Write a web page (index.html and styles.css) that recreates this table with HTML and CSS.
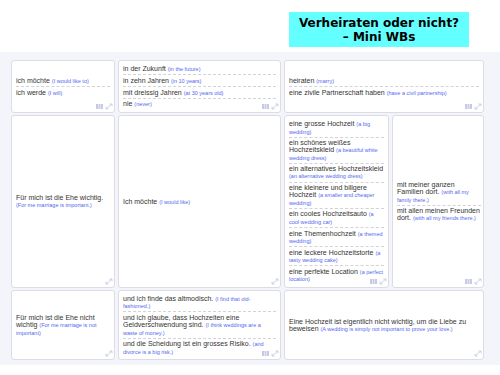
FILE: index.html
```html
<!DOCTYPE html>
<html lang="de">
<head>
<meta charset="utf-8">
<title>Verheiraten oder nicht? – Mini WBs</title>
<link rel="stylesheet" href="styles.css">
</head>
<body>
<header class="top">
  <h1 class="title">Verheiraten oder nicht?<br>– Mini WBs</h1>
</header>
<main class="board">
  <!-- row 1 -->
  <section class="card">
    <ul class="list">
      <li class="item">ich möchte <span class="t">(I would like to)</span></li>
      <li class="item">ich werde <span class="t">(I will)</span></li>
    </ul>
    <div class="tools"><svg class="ic-grid" viewBox="0 0 7 5"><rect x="0" y="0" width="2" height="5"/><rect x="2.5" y="0" width="2" height="5"/><rect x="5" y="0" width="2" height="5"/></svg><svg class="ic-arrow" viewBox="0 0 8 7"><path d="M1 6 L7 1 M4.4 1 H7 V3.4 M1 3.6 V6 H3.6"/></svg></div>
  </section>
  <section class="card">
    <ul class="list">
      <li class="item">in der Zukunft <span class="t">(in the future)</span></li>
      <li class="item">in zehn Jahren <span class="t">(in 10 years)</span></li>
      <li class="item">mit dreissig Jahren <span class="t">(at 30 years old)</span></li>
      <li class="item">nie <span class="t">(never)</span></li>
    </ul>
    <div class="tools"><svg class="ic-grid" viewBox="0 0 7 5"><rect x="0" y="0" width="2" height="5"/><rect x="2.5" y="0" width="2" height="5"/><rect x="5" y="0" width="2" height="5"/></svg><svg class="ic-arrow" viewBox="0 0 8 7"><path d="M1 6 L7 1 M4.4 1 H7 V3.4 M1 3.6 V6 H3.6"/></svg></div>
  </section>
  <section class="card wide">
    <ul class="list">
      <li class="item">heiraten <span class="t">(marry)</span></li>
      <li class="item">eine zivile Partnerschaft haben <span class="t">(have a civil partnership)</span></li>
    </ul>
    <div class="tools"><svg class="ic-grid" viewBox="0 0 7 5"><rect x="0" y="0" width="2" height="5"/><rect x="2.5" y="0" width="2" height="5"/><rect x="5" y="0" width="2" height="5"/></svg><svg class="ic-arrow" viewBox="0 0 8 7"><path d="M1 6 L7 1 M4.4 1 H7 V3.4 M1 3.6 V6 H3.6"/></svg></div>
  </section>

  <!-- row 2 -->
  <section class="card">
    <ul class="list">
      <li class="item">Für mich ist die Ehe wichtig. <span class="t">(For me marriage is important.)</span></li>
    </ul>
    <div class="tools"><svg class="ic-arrow" viewBox="0 0 8 7"><path d="M1 6 L7 1 M4.4 1 H7 V3.4 M1 3.6 V6 H3.6"/></svg></div>
  </section>
  <section class="card">
    <ul class="list">
      <li class="item">Ich möchte <span class="t">(I would like)</span></li>
    </ul>
    <div class="tools"><svg class="ic-arrow" viewBox="0 0 8 7"><path d="M1 6 L7 1 M4.4 1 H7 V3.4 M1 3.6 V6 H3.6"/></svg></div>
  </section>
  <section class="card">
    <ul class="list">
      <li class="item">eine grosse Hochzeit <span class="t">(a big wedding)</span></li>
      <li class="item">ein schönes weißes Hochzeitskleid <span class="t">(a beautiful white wedding dress)</span></li>
      <li class="item">ein alternatives Hochzeitskleid <span class="t">(an alternative wedding dress)</span></li>
      <li class="item">eine kleinere und billgere Hochzeit <span class="t">(a smaller and cheaper wedding)</span></li>
      <li class="item">ein cooles Hochzeitsauto <span class="t">(a cool wedding car)</span></li>
      <li class="item">eine Themenhochzeit <span class="t">(a themed wedding)</span></li>
      <li class="item">eine leckere Hochzeitstorte <span class="t">(a tasty wedding cake)</span></li>
      <li class="item">eine perfekte Location <span class="t">(a perfect location)</span></li>
    </ul>
    <div class="tools"><svg class="ic-grid" viewBox="0 0 7 5"><rect x="0" y="0" width="2" height="5"/><rect x="2.5" y="0" width="2" height="5"/><rect x="5" y="0" width="2" height="5"/></svg><svg class="ic-arrow" viewBox="0 0 8 7"><path d="M1 6 L7 1 M4.4 1 H7 V3.4 M1 3.6 V6 H3.6"/></svg></div>
  </section>
  <section class="card narrow">
    <ul class="list">
      <li class="item">mit meiner ganzen Familien dort. <span class="t">(with all my family there.)</span></li>
      <li class="item">mit allen meinen Freunden dort. <span class="t">(with all my friends there.)</span></li>
    </ul>
    <div class="tools"><svg class="ic-grid" viewBox="0 0 7 5"><rect x="0" y="0" width="2" height="5"/><rect x="2.5" y="0" width="2" height="5"/><rect x="5" y="0" width="2" height="5"/></svg><svg class="ic-arrow" viewBox="0 0 8 7"><path d="M1 6 L7 1 M4.4 1 H7 V3.4 M1 3.6 V6 H3.6"/></svg></div>
  </section>

  <!-- row 3 -->
  <section class="card">
    <ul class="list">
      <li class="item">Für mich ist die Ehe nicht wichtig <span class="t">(For me marriage is not important)</span></li>
    </ul>
    <div class="tools"><svg class="ic-arrow" viewBox="0 0 8 7"><path d="M1 6 L7 1 M4.4 1 H7 V3.4 M1 3.6 V6 H3.6"/></svg></div>
  </section>
  <section class="card">
    <ul class="list">
      <li class="item">und ich finde das altmodisch. <span class="t">(I find that old-fashioned.)</span></li>
      <li class="item">und ich glaube, dass Hochzeiten eine Geldverschwendung sind. <span class="t">(I think weddings are a waste of money.)</span></li>
      <li class="item">und die Scheidung ist ein grosses Risiko. <span class="t">(and divorce is a big risk.)</span></li>
    </ul>
    <div class="tools"><svg class="ic-grid" viewBox="0 0 7 5"><rect x="0" y="0" width="2" height="5"/><rect x="2.5" y="0" width="2" height="5"/><rect x="5" y="0" width="2" height="5"/></svg><svg class="ic-arrow" viewBox="0 0 8 7"><path d="M1 6 L7 1 M4.4 1 H7 V3.4 M1 3.6 V6 H3.6"/></svg></div>
  </section>
  <section class="card wide">
    <ul class="list">
      <li class="item">Eine Hochzeit ist eigentlich nicht wichtig, um die Liebe zu beweisen <span class="t">(A wedding is simply not important to prove your love.)</span></li>
    </ul>
    <div class="tools"><svg class="ic-arrow" viewBox="0 0 8 7"><path d="M1 6 L7 1 M4.4 1 H7 V3.4 M1 3.6 V6 H3.6"/></svg></div>
  </section>
</main>
</body>
</html>
```
FILE: styles.css
```css
html, body {
  margin: 0;
  padding: 0;
  background: #ffffff;
}

.top {
  height: 52px;
  box-sizing: border-box;
  display: flex;
  justify-content: flex-end;
  align-items: flex-start;
  padding: 12px 31px 0 0;
}

.title {
  margin: 0;
  width: 180px;
  height: 35px;
  box-sizing: border-box;
  padding: 3.5px 0;
  background: #64ffff;
  color: #000;
  font-family: "DejaVu Sans", Verdana, sans-serif;
  font-weight: bold;
  font-size: 12px;
  line-height: 14px;
  text-align: center;
}

.board {
  background: #f3f5fb;
  height: 313px;
  box-sizing: border-box;
  padding: 8px 16px 5px 11px;
  display: grid;
  grid-template-columns: 104px 163px 105px 92px;
  grid-template-rows: 53px 173px 70px;
  column-gap: 3px;
  row-gap: 2px;
}

.card {
  position: relative;
  background: #ffffff;
  border: 1px solid #dcdde4;
  border-radius: 3px;
  padding: 0 4px;
  display: flex;
  flex-direction: column;
  justify-content: center;
  font-family: "Liberation Sans", Arial, sans-serif;
  font-size: 7px;
  line-height: 7px;
  color: #333333;
  min-width: 0;
}

.wide {
  grid-column: span 2;
}

.narrow {
  padding-right: 2px;
}

.list {
  list-style: none;
  margin: 0;
  padding: 0;
}

.item {
  padding: 1.6px 0;
}

.item + .item {
  border-top: 1px dashed #d2d3da;
}

.t {
  color: #5468ee;
  font-size: 5.5px;
  line-height: 1;
}

.tools {
  position: absolute;
  right: 1px;
  bottom: 2px;
  display: flex;
  align-items: flex-end;
  gap: 2px;
}

.ic-grid {
  width: 7px;
  height: 5px;
  fill: #c7cae4;
  margin-bottom: 1px;
}

.ic-arrow {
  width: 8px;
  height: 7px;
  fill: none;
  stroke: #c9cce2;
  stroke-width: 0.9;
}
```
